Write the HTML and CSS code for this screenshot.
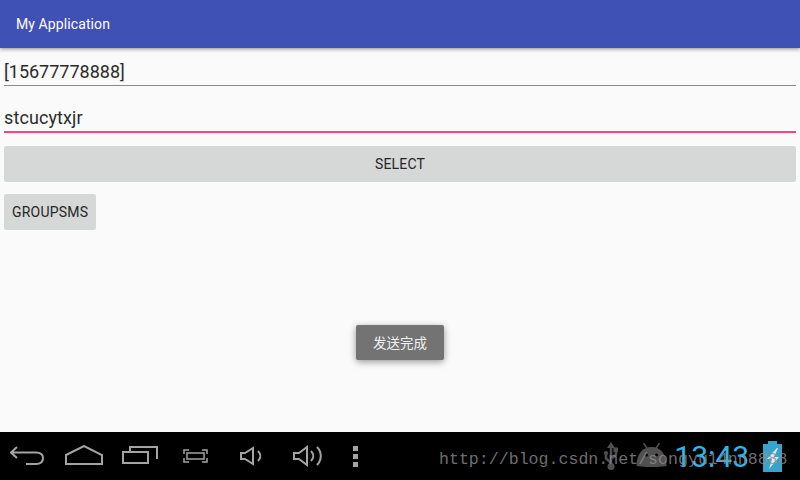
FILE: index.html
```html
<!DOCTYPE html>
<html lang="zh">
<head>
  <meta charset="UTF-8">
  <title>My Application</title>
  <link rel="stylesheet" href="styles.css">
</head>
<body>
  <div class="screen">
    <header class="app-bar">My Application</header>

    <main class="content">
      <div class="field">[15677778888]</div>
      <div class="field field-active">stcucytxjr</div>
      <button class="btn btn-wide">SELECT</button>
      <button class="btn">GROUPSMS</button>
      <div class="toast">发送完成</div>
    </main>

    <nav class="nav-bar">
      <div class="nav-keys">
        <svg class="key key-back" viewBox="0 0 36 22"><path d="M7 2 1 7.500 7 13M1 7.500h25c6 0 7 3 7 5.500s-1 6-7 6H16"/></svg>
        <svg class="key key-home" viewBox="0 0 38 20"><path d="M1 10 19 1l18 9v9H1z"/></svg>
        <svg class="key key-recent" viewBox="0 0 36 20"><path d="M1 6h25v11H1zM8 6V1h27v12"/></svg>
        <svg class="key key-shot" viewBox="0 0 25 14"><path d="M1 5V1h5M19 1h5v4M1 9v4h5M19 13h5V9"/><path d="M4 4h17v6H4z"/></svg>
        <svg class="key key-vol" viewBox="0 0 24 20"><path d="M1 7h4l8-5v16l-8-5H1zM18 5c3 3 3 7 0 10"/></svg>
        <svg class="key key-volup" viewBox="0 0 30 24"><path d="M1 9h5l8-6v18l-8-6H1zM18 7c3 3 3 7 0 10M24 3c5 5 5 13 0 18"/></svg>
        <span class="key-menu"><i></i><i></i><i></i></span>
      </div>
      <div class="status">
        <svg class="usb" viewBox="0 0 14 28"><path class="usb-head" d="M7 0 3 6h8z"/><path class="usb-line" d="M7 4v20M7 21 2 16.500V12M7 17l5-4V9"/><circle cx="7" cy="24.500" r="3.500" class="usb-dot"/><circle cx="2" cy="11" r="2" class="usb-dot"/><rect x="9.500" y="5.500" width="4.500" height="4.500" class="usb-dot"/></svg>
        <svg class="android" viewBox="0 0 30 24"><path d="M0 23C0 11 6 4 15 4s15 7 15 19c-8 1.500-22 1.500-30 0z"/><path class="android-ant" d="M7 0l4 6M23 0l-4 6"/><circle cx="10" cy="12" r="1.500" class="eye"/><circle cx="20" cy="12" r="1.500" class="eye"/></svg>
        <span class="clock">13:43</span>
        <svg class="battery" viewBox="0 0 19 31"><path d="M5 0h9v3h5v28H0V3h5z" fill="#3aa3cc"/><path d="M14 7 4 18h5L6 28l10-12h-5l4-9z" fill="#d8eef6"/></svg>
      </div>
    </nav>

    <div class="watermark">http://blog.csdn.net/songyu14nn8888</div>
  </div>
</body>
</html>
```

FILE: styles.css
```css
html, body {
  margin: 0;
  padding: 0;
}
*, *::before, *::after {
  box-sizing: border-box;
}
body {
  font-family: Roboto, "Noto Sans CJK SC", sans-serif;
}
.screen {
  position: relative;
  width: 800px;
  height: 480px;
  display: flex;
  flex-direction: column;
  overflow: hidden;
  background: #fafafa;
}
.app-bar {
  height: 48px;
  padding: 0 16px;
  display: flex;
  align-items: center;
  font-size: 14px;
  letter-spacing: 0.1px;
  color: #fff;
  background: #3f51b5;
  box-shadow: 0 1px 4px rgba(0, 0, 0, 0.45);
  z-index: 1;
}
.content {
  position: relative;
  flex: 1;
  padding: 8px 4px 0;
  display: flex;
  flex-direction: column;
  align-items: flex-start;
}
.field {
  width: 100%;
  height: 30px;
  padding-top: 4px;
  font-size: 18px;
  line-height: 24px;
  color: #2b2b2b;
  border-bottom: 1px solid #8a8a8a;
}
.field-active {
  height: 31px;
  margin-top: 16px;
  letter-spacing: 0.1px;
  border-bottom: 2px solid #ff4081;
}
.btn {
  height: 36px;
  margin-top: 12px;
  padding: 0 8px;
  font-family: inherit;
  font-size: 14px;
  letter-spacing: 0.2px;
  color: #262626;
  background: #d6d7d7;
  border: none;
  border-radius: 2px;
}
.btn-wide {
  width: 100%;
  margin-top: 13px;
}
.toast {
  position: absolute;
  left: 356px;
  top: 277px;
  width: 88px;
  height: 35px;
  padding-bottom: 2px;
  display: flex;
  align-items: center;
  justify-content: center;
  font-size: 13.500px;
  color: #f0f0f0;
  background: #737373;
  border-radius: 2px;
  box-shadow: 0 2px 7px rgba(0, 0, 0, 0.4);
}
.nav-bar {
  height: 48px;
  display: flex;
  align-items: center;
  justify-content: space-between;
  background: #000;
}
.nav-keys {
  display: flex;
  align-items: center;
  padding-left: 10px;
}
.key {
  fill: none;
  stroke: #a4a4a4;
  stroke-width: 2;
}
.key-back { width: 36px; height: 22px; }
.key-home { width: 38px; height: 20px; margin-left: 19px; margin-top: -2px; }
.key-recent { width: 36px; height: 20px; margin-left: 19px; }
.key-shot { width: 25px; height: 14px; margin-left: 25px; stroke-width: 1.500; }
.key-vol { width: 24px; height: 20px; margin-left: 32px; }
.key-volup { width: 30px; height: 24px; margin-left: 29px; }
.key-menu {
  display: flex;
  flex-direction: column;
  gap: 3px;
  margin-left: 30px;
}
.key-menu i {
  display: block;
  width: 5px;
  height: 5px;
  background: #a4a4a4;
}
.status {
  display: flex;
  align-items: center;
  padding-right: 18px;
}
.usb {
  width: 14px;
  height: 28px;
}
.usb-head, .usb-dot {
  fill: #505050;
}
.usb-line {
  fill: none;
  stroke: #505050;
  stroke-width: 2.500;
}
.android {
  width: 31px;
  height: 24px;
  margin-left: 18px;
  margin-top: -2px;
  fill: #505050;
}
.android-ant {
  fill: none;
  stroke: #505050;
  stroke-width: 1.500;
}
.android .eye {
  fill: #000;
}
.clock {
  margin-left: 7px;
  font-size: 30px;
  color: #33b5e5;
}
.battery {
  width: 19px;
  height: 31px;
  margin-left: 14px;
}
.watermark {
  position: absolute;
  left: 439px;
  top: 447px;
  font-family: "Liberation Mono", monospace;
  font-size: 16.600px;
  line-height: 26px;
  white-space: nowrap;
  color: rgba(140, 140, 140, 0.8);
}
```
